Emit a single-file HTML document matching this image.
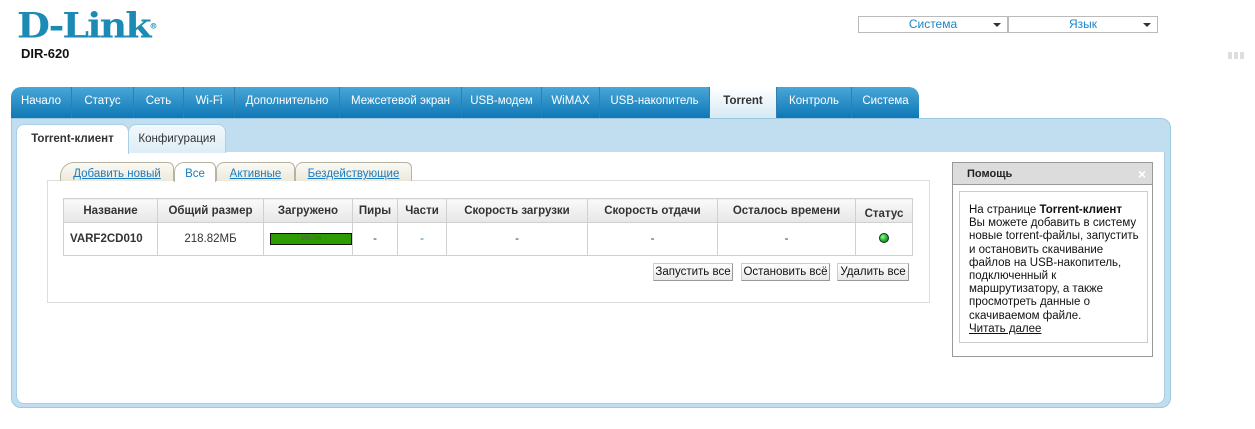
<!DOCTYPE html>
<html><head><meta charset="utf-8"><style>
*{box-sizing:border-box;margin:0;padding:0}
body{width:1255px;height:429px;background:#fff;font-family:"Liberation Sans","DejaVu Sans",sans-serif;font-size:11px;color:#222;position:relative;overflow:hidden}
.abs{position:absolute}
.logo{left:17px;top:8px;font-family:"DejaVu Serif",serif;font-weight:bold;font-size:38px;color:#1b8bb5;letter-spacing:-2px;transform:scaleY(0.9);transform-origin:top left;line-height:40px}
.model{left:21px;top:46px;font-weight:bold;font-size:13px;color:#111}
.dd{top:16px;height:17px;border:1px solid #bbb;color:#1a86c8;font-size:12px;line-height:15px;text-align:center}
.dd:after{content:"";position:absolute;right:6px;top:6px;border-left:4px solid transparent;border-right:4px solid transparent;border-top:4px solid #333}
.nav{left:11px;top:87px;width:908px;height:31px;background:linear-gradient(#4aa6d6,#0e78b6);border-radius:10px 10px 0 0;display:flex;overflow:hidden}
.nav div{color:#fff;font-size:11.5px;line-height:29px;text-align:center;border-right:1px solid #2f7fb0;flex:none}
.nav .on{background:linear-gradient(#fff,#d6eaf4);color:#333;font-weight:bold}
.panel{left:11px;top:118px;width:1160px;height:290px;background:#c1def0;border:1px solid #9cc8e2;border-radius:0 10px 10px 10px}
.inner{left:16px;top:152px;width:1149px;height:252px;background:#fff;border-radius:0 0 8px 8px;border:1px solid #a9cfe5;border-top:none}
.st{top:124px;height:29px;line-height:28px;font-size:11.5px;text-align:center;border:1px solid #a9cfe5;border-bottom:none;border-radius:8px 8px 0 0}
.it{top:162px;height:19px;font-size:11.5px;color:#1a7cc0;text-align:center;line-height:22px;border:1px solid #b8b2a0;border-bottom:none;background:linear-gradient(#fbfaf4,#ece9dc);border-radius:8px 6px 0 0}
.box{left:47px;top:180px;width:883px;height:123px;border:1px solid #ddd}
table{position:absolute;left:63px;top:198px;border-collapse:collapse;width:850px}
td,th{border:1px solid #d0d0d0;text-align:center;font-size:11.5px}
th{height:24px;background:linear-gradient(#fafafa,#e6e6e6);font-weight:bold;color:#333}
td{height:33px;color:#333}
.btn{top:263px;height:18px;border:1px solid #ccc;border-right-color:#999;border-bottom-color:#999;background:linear-gradient(#fff,#e8e8e8);font-size:11.5px;line-height:16px;text-align:center;color:#111}
.help{left:952px;top:162px;width:201px;height:195px;border:1px solid #999}
.hh{height:22px;background:#dcdcdc;border-bottom:1px solid #999;font-weight:bold;font-size:11px;line-height:23px;padding-left:14px;position:relative}
.hb{position:absolute;left:6px;top:28px;width:189px;height:152px;border:1px solid #ccc;padding:12px 4px 12px 9px;font-size:11.5px;line-height:13.2px;color:#111;white-space:nowrap}
</style></head><body>
<div class="abs logo">D-Link<sup style="font-size:8px;vertical-align:top;letter-spacing:0">®</sup></div>
<div class="abs model">DIR-620</div>
<div class="abs dd" style="left:858px;width:150px">Система</div>
<div class="abs dd" style="left:1008px;width:150px">Язык</div>
<div class="abs" style="left:1228px;top:52px;width:17px;height:7px;background:repeating-linear-gradient(90deg,#ddd 0 4px,#fff 4px 6px)"></div>
<div class="abs nav">
<div style="width:61px">Начало</div><div style="width:62px">Статус</div><div style="width:50px">Сеть</div><div style="width:51px">Wi-Fi</div><div style="width:105px">Дополнительно</div><div style="width:122px">Межсетевой экран</div><div style="width:80px">USB-модем</div><div style="width:58px">WiMAX</div><div style="width:110px">USB-накопитель</div><div class="on" style="width:67px">Torrent</div><div style="width:75px">Контроль</div><div style="width:67px;border:none">Система</div>
</div>
<div class="abs panel"></div>
<div class="abs inner"></div>
<div class="abs st" style="left:16px;width:113px;background:#fff;font-weight:bold;color:#333;height:30px">Torrent-клиент</div>
<div class="abs st" style="left:128px;width:98px;background:linear-gradient(#f2f8fc,#ddedf6);color:#333">Конфигурация</div>
<div class="abs box"></div>
<div class="abs it" style="left:60px;width:114px;text-decoration:underline;border-radius:14px 6px 0 0">Добавить новый</div>
<div class="abs it" style="left:174px;width:42px;background:#fff;height:20px;border-radius:10px 6px 0 0">Все</div>
<div class="abs it" style="left:216px;width:79px;text-decoration:underline">Активные</div>
<div class="abs it" style="left:295px;width:117px;text-decoration:underline">Бездействующие</div>
<table>
<tr><th style="width:94px">Название</th><th style="width:106px">Общий размер</th><th style="width:87px">Загружено</th><th style="width:45px">Пиры</th><th style="width:49px">Части</th><th style="width:141px">Скорость загрузки</th><th style="width:130px">Скорость отдачи</th><th style="width:138px">Осталось времени</th><th style="vertical-align:bottom;padding-bottom:2px">Статус</th></tr>
<tr><td style="font-weight:bold;text-align:left;padding-left:6px">VARF2CD010</td><td>218.82МБ</td><td style="text-align:left;padding-left:6px"><div style="width:82px;height:12px;background:#2c9c00;border:1px solid #111;font-size:6px;line-height:10px;color:#555;text-align:center">100.0%</div></td><td>-</td><td style="color:#1a7cc0">-</td><td>-</td><td>-</td><td>-</td><td><span style="display:inline-block;width:10px;height:10px;border-radius:50%;background:radial-gradient(circle at 35% 35%,#8f8,#1a2 60%);border:1px solid #222"></span></td></tr>
</table>
<div class="abs btn" style="left:653px;width:80px">Запустить все</div>
<div class="abs btn" style="left:741px;width:89px">Остановить всё</div>
<div class="abs btn" style="left:837px;width:72px">Удалить все</div>
<div class="abs help"><div class="hh">Помощь<span style="position:absolute;right:6px;top:0;color:#fff;font-size:14px">×</span></div>
<div class="hb">На странице <b>Torrent-клиент</b><br>Вы можете добавить в систему<br>новые torrent-файлы, запустить<br>и остановить скачивание<br>файлов на USB-накопитель,<br>подключенный к<br>маршрутизатору, а также<br>просмотреть данные о<br>скачиваемом файле.<br><u>Читать далее</u></div></div>
</body></html>
